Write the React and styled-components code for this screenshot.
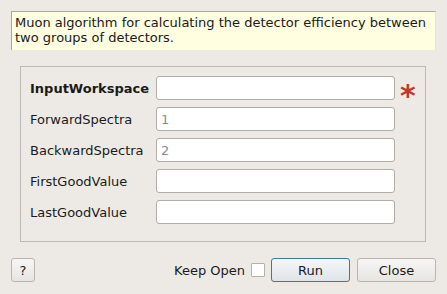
import { createGlobalStyle, styled } from "styled-components";

const GlobalStyle = createGlobalStyle`
  html, body {
    margin: 0;
    background: #edeae6;
  }
  body {
    font-family: "DejaVu Sans", "Liberation Sans", sans-serif;
    font-size: 13px;
    color: #1a1a1a;
  }
`;

const Dialog = styled.div`
  width: 447px;
  height: 294px;
  box-sizing: border-box;
  padding: 11px 11px 0 11px;
  display: flex;
  flex-direction: column;
`;

const Description = styled.div`
  height: 39px;
  box-sizing: border-box;
  background: #fffee0;
  border-top: 1px solid #a9a6a2;
  border-left: 1px solid #a9a6a2;
  border-right: 1px solid #e6e3df;
  padding: 3px 3px 0 3px;
  line-height: 15px;
`;

const GroupBox = styled.div`
  margin: 16px 10px 0 9px;
  height: 176px;
  box-sizing: border-box;
  border: 1px solid #bdb9b4;
  padding: 9px 0 0 9px;
  display: grid;
  grid-template-columns: 126px 239px 22px;
  grid-auto-rows: 24px;
  row-gap: 7px;
  align-items: center;
`;

const Label = styled.label`
  font-weight: ${(p) => (p.$bold ? "bold" : "normal")};
`;

const Field = styled.input`
  box-sizing: border-box;
  height: 24px;
  width: 239px;
  border: 1px solid #b1ada8;
  border-radius: 3px;
  background: #fff;
  padding: 0 0 0 4px;
  font-family: inherit;
  font-size: 13px;
  color: #8c8c8c;
  outline: none;
  &::placeholder {
    color: #8c8c8c;
  }
`;

const Star = styled.span`
  color: #c1392b;
  font-size: 30px;
  font-weight: bold;
  line-height: 24px;
  padding: 8px 0 0 5px;
  height: 24px;
  box-sizing: border-box;
`;

const Footer = styled.div`
  margin-top: 16px;
  display: flex;
  align-items: center;
  height: 24px;
`;

const Button = styled.button`
  box-sizing: border-box;
  height: 24px;
  width: ${(p) => p.$w || 79}px;
  margin-left: ${(p) => p.$ml || 0}px;
  border: 1px solid ${(p) => (p.$primary ? "#3b78a3" : "#b9b5b0")};
  border-radius: 3px;
  background: ${(p) =>
    p.$primary
      ? "linear-gradient(#f5f7f8, #dfe4e8)"
      : "linear-gradient(#f7f6f5, #e7e5e2)"};
  font-family: inherit;
  font-size: 13px;
  color: #1a1a1a;
  padding: 0;
`;

const Spacer = styled.div`
  flex: 1;
`;

const KeepOpen = styled.label`
  display: flex;
  align-items: center;
  gap: 6px;
`;

const Check = styled.span`
  display: inline-block;
  width: 14px;
  height: 14px;
  box-sizing: border-box;
  border: 1px solid #b4b0ab;
  background: #fff;
  border-radius: 1px;
`;

const fields = [
  { name: "InputWorkspace", bold: true, value: "", required: true },
  { name: "ForwardSpectra", value: "1" },
  { name: "BackwardSpectra", value: "2" },
  { name: "FirstGoodValue", value: "" },
  { name: "LastGoodValue", value: "" },
];

export default function App() {
  return (
    <>
      <GlobalStyle />
      <Dialog>
        <Description>
          Muon algorithm for calculating the detector efficiency between two
          groups of detectors.
        </Description>
        <GroupBox>
          {fields.map((f) => [
            <Label key={f.name + "l"} $bold={f.bold}>
              {f.name}
            </Label>,
            <Field key={f.name + "f"} placeholder={f.value} readOnly />,
            f.required ? <Star key={f.name + "s"}>*</Star> : <span key={f.name + "s"} />,
          ])}
        </GroupBox>
        <Footer>
          <Button $w={24}>?</Button>
          <Spacer />
          <KeepOpen>
            Keep Open <Check />
          </KeepOpen>
          <Button $primary $ml={6}>
            Run
          </Button>
          <Button $ml={7}>Close</Button>
        </Footer>
      </Dialog>
    </>
  );
}
